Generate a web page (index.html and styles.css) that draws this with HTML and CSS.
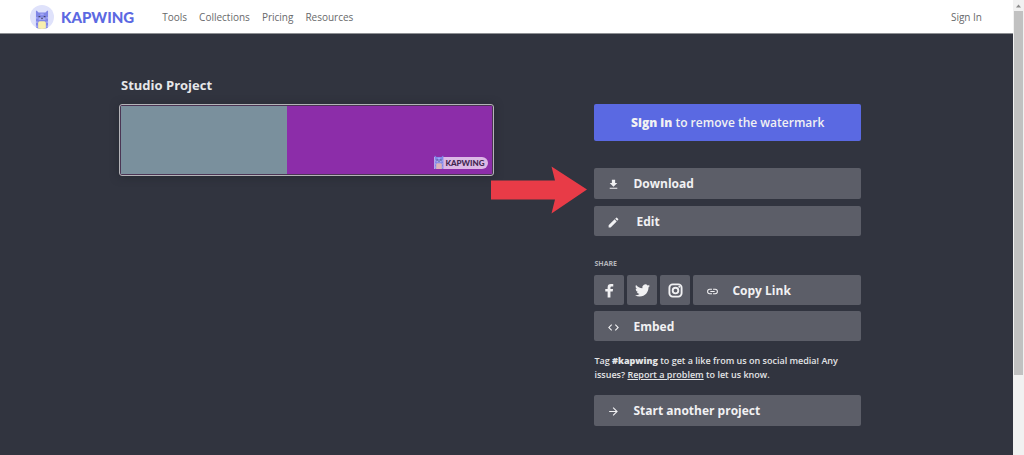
FILE: index.html
```html
<!DOCTYPE html>
<html lang="en">
<head>
<meta charset="utf-8">
<title>Kapwing - Studio Project</title>
<link rel="stylesheet" href="styles.css">
</head>
<body>
<svg class="sprite" aria-hidden="true">
  <symbol id="cat" viewBox="0 0 16 22">
    <path fill="#8087e6" d="M1 1 2 1 4 3h8l2-2L15 1v21H1z"/>
    <path fill="#a3a7f4" d="M1 8h2v2H1zM13 8h2v2h-2zM1 13h2v2H1zM13 13h2v2h-2zM1 18h2v2H1zM13 18h2v2h-2zM6 4h4v2H6z"/>
    <path fill="#a5a9f3" d="M4 8.500h8v3H4z"/>
    <path fill="#454768" d="M4 7h2v1.500H4zM10 7h2v1.500h-2zM6.500 9h3L8 11z"/>
    <path d="M3.500 22v-7q0-2 2-2h5q2 0 2 2v7z"/>
  </symbol>
</svg>
<div class="window">
  <div class="page">
    <header class="topbar">
      <a class="brand" href="#">
        <span class="brand-mark"><svg class="brand-cat" aria-hidden="true"><use href="#cat"/></svg></span>
        <span class="brand-name">KAPWING</span>
      </a>
      <nav class="nav">
        <a href="#">Tools</a>
        <a href="#">Collections</a>
        <a href="#">Pricing</a>
        <a href="#">Resources</a>
      </nav>
      <a class="signin" href="#">Sign In</a>
    </header>
    <main class="content">
      <section class="project">
        <h1 class="title">Studio Project</h1>
        <div class="preview">
          <div class="pane-gray"></div>
          <div class="pane-purple"></div>
          <div class="watermark">
            <svg class="watermark-cat" aria-hidden="true"><use href="#cat"/></svg>
            <span class="watermark-name">KAPWING</span>
          </div>
        </div>
      </section>
      <section class="actions">
        <button class="primary" type="button"><strong>Sign in</strong> to remove the watermark</button>
        <div class="stack">
          <button class="action" type="button">
            <svg class="icon" viewBox="0 0 24 24" aria-hidden="true"><path d="M19 9h-4V3H9v6H5l7 7zM5 18v2h14v-2z"/></svg>
            <span>Download</span>
          </button>
          <button class="action edit" type="button">
            <svg class="icon" viewBox="0 0 24 24" aria-hidden="true"><path d="M3 17.250V21h3.750L17.810 9.940l-3.750-3.750zM20.710 7.040a1 1 0 0 0 0-1.410l-2.340-2.340a1 1 0 0 0-1.410 0l-1.830 1.830 3.750 3.750z"/></svg>
            <span>Edit</span>
          </button>
          <svg class="pointer" viewBox="0 0 96 48" aria-hidden="true"><path d="M0 14.500h64L60.500 0.500 96 23.500 60.500 47.500 64 33.500H0z"/></svg>
        </div>
        <h2 class="share-label">SHARE</h2>
        <div class="share">
          <button class="social" type="button" aria-label="Facebook">
            <svg viewBox="0 0 16 16" aria-hidden="true"><path d="M6 15.500V9H3.500V6.300H6V4.500Q6 1 9.500 1H12v2.700h-1.700q-1.300 0-1.300 1.300v1.300h2.800L11.400 9H9v6.500z"/></svg>
          </button>
          <button class="social" type="button" aria-label="Twitter">
            <svg viewBox="0 0 24 24" aria-hidden="true"><path d="M23.950 4.570a10 10 0 0 1-2.820.77 4.960 4.960 0 0 0 2.160-2.720c-.95.55-2 .95-3.120 1.180a4.920 4.920 0 0 0-8.390 4.480C7.690 8.090 4.070 6.130 1.640 3.160a4.820 4.820 0 0 0-.67 2.480c0 1.710.87 3.210 2.190 4.100a4.900 4.900 0 0 1-2.230-.62v.06a4.920 4.920 0 0 0 3.950 4.830 5 5 0 0 1-2.210.08 4.940 4.940 0 0 0 4.600 3.420A9.870 9.870 0 0 1 0 19.540a14 14 0 0 0 7.550 2.210c9.050 0 14-7.500 14-13.980l-.02-.64a9.900 9.900 0 0 0 2.420-2.560z"/></svg>
          </button>
          <button class="social" type="button" aria-label="Instagram">
            <svg viewBox="0 0 16 16" aria-hidden="true"><rect class="line" x="1.500" y="1.500" width="13" height="13" rx="3.500"/><circle class="line" cx="8" cy="8" r="3"/><circle cx="12" cy="4" r="1"/></svg>
          </button>
          <button class="action copy" type="button">
            <svg class="icon" viewBox="0 0 24 24" aria-hidden="true"><path d="M3.900 12A3.100 3.100 0 0 1 7 8.900h4V7H7a5 5 0 0 0 0 10h4v-1.900H7A3.100 3.100 0 0 1 3.900 12zM8 13h8v-2H8zM17 7h-4v1.900h4a3.100 3.100 0 0 1 0 6.200h-4V17h4a5 5 0 0 0 0-10z"/></svg>
            <span>Copy Link</span>
          </button>
        </div>
        <button class="action slim" type="button">
          <svg class="icon" viewBox="0 0 24 24" aria-hidden="true"><path d="M9.400 16.600 4.800 12l4.600-4.600L8 6l-6 6 6 6zM14.600 16.600l4.600-4.600-4.600-4.600L16 6l6 6-6 6z"/></svg>
          <span>Embed</span>
        </button>
        <p class="note">Tag <strong>#kapwing</strong> to get a like from us on social media! Any issues? <a href="#">Report a problem</a> to let us know.</p>
        <button class="action" type="button">
          <svg class="icon" viewBox="0 0 24 24" aria-hidden="true"><path d="m12 4-1.410 1.410L16.170 11H4v2h12.170l-5.580 5.590L12 20l8-8z"/></svg>
          <span>Start another project</span>
        </button>
      </section>
    </main>
  </div>
  <div class="scrollbar" aria-hidden="true">
    <svg class="scroll-up" viewBox="0 0 11 11"><path d="M3 7.500 5.500 4.500 8 7.500z"/></svg>
    <div class="scroll-thumb"></div>
  </div>
</div>
</body>
</html>
```
FILE: styles.css
```css
* {
  box-sizing: border-box;
}

body {
  margin: 0;
  font-family: "Open Sans", "Noto Sans", sans-serif;
  background: #31343f;
}

button {
  border: 0;
  border-radius: 2px;
  font: inherit;
  color: #f1f1f3;
  cursor: pointer;
}

.sprite {
  display: none;
}

.window {
  display: flex;
  min-height: 100vh;
}

.page {
  flex: 1;
}

.topbar {
  display: flex;
  align-items: center;
  height: 34px;
  padding: 0 31px 0 30px;
  background: #fff;
  border-bottom: 1px solid #8d8f93;
}

.topbar a {
  color: #68696b;
  font-size: 10px;
  font-weight: 500;
  text-decoration: none;
}

.topbar .brand {
  display: flex;
  align-items: center;
  gap: 7px;
}

.brand-mark {
  display: flex;
  justify-content: center;
  align-items: flex-end;
  width: 24px;
  height: 24px;
  border-radius: 50%;
  background: #dfe2fb;
  overflow: hidden;
}

.brand-cat {
  width: 14px;
  height: 19px;
  fill: #f8efae;
}

.brand-name {
  color: #5c69e2;
  font-family: Lato, sans-serif;
  font-size: 15px;
  font-weight: 900;
}

.nav {
  display: flex;
  gap: 12px;
  margin-left: 28px;
}

.topbar .signin {
  margin-left: auto;
}

.content {
  display: grid;
  grid-template-columns: minmax(0, 376fr) minmax(0, 267fr);
  column-gap: 100px;
  padding: 41px 15% 29px 119px;
}

.title {
  margin: 0 0 9px 2px;
  color: #e6e7e9;
  font-size: 13px;
  font-weight: 700;
  line-height: 20px;
}

.preview {
  position: relative;
  display: flex;
  height: 72px;
  border: 1px solid #b4b4b8;
  border-radius: 3px;
  padding: 1px;
  background: #4b3554;
  box-shadow: 0 1px 8px #262932;
}

.pane-gray {
  flex: 166;
  background: #7a909d;
}

.pane-purple {
  flex: 206;
  background: #8c2da9;
}

.watermark {
  position: absolute;
  right: 5px;
  bottom: 6px;
  display: flex;
  align-items: center;
  gap: 1px;
  height: 12px;
  padding-right: 4px;
  border-radius: 0 6px 6px 0;
  background: #dcb8e6;
  color: #40264f;
}

.watermark-cat {
  width: 10px;
  height: 14px;
  margin-top: -2px;
  fill: #dbb3b9;
}

.watermark-name {
  font-family: Lato, sans-serif;
  font-size: 8px;
  font-weight: 900;
}

.actions {
  display: flex;
  flex-direction: column;
  padding-top: 29px;
}

.primary {
  height: 37px;
  background: #5a69e2;
  font-size: 12px;
  font-weight: 600;
}

.stack {
  position: relative;
  display: flex;
  flex-direction: column;
  gap: 7px;
  margin-top: 27px;
}

.pointer {
  position: absolute;
  right: 100%;
  top: -2px;
  width: 96px;
  height: 48px;
  margin-right: 7px;
  fill: #e83b47;
}

.action {
  display: flex;
  align-items: center;
  gap: 13px;
  height: 31px;
  padding: 0 13px;
  background: #5c5e68;
  font-size: 12px;
  font-weight: 700;
}

.edit,
.copy,
.slim {
  height: 30px;
}

.edit {
  gap: 16px;
}

.icon {
  width: 13px;
  height: 13px;
  margin-top: 2px;
  fill: currentColor;
}

.share-label {
  margin: 22px 0 5px;
  color: #b4b5ba;
  font-size: 7px;
  font-weight: 700;
  line-height: 12px;
}

.share {
  display: flex;
  gap: 3px;
  margin-bottom: 6px;
}

.social {
  display: grid;
  place-items: center;
  width: 30px;
  height: 30px;
  padding: 0;
  background: #5c5e68;
}

.social svg {
  width: 15px;
  height: 15px;
  fill: currentColor;
}

.social .line {
  fill: none;
  stroke: currentColor;
  stroke-width: 2;
}

.copy {
  flex: 1;
}

.note {
  margin: 13px 0;
  padding-right: 16px;
  color: #e3e4e6;
  font-size: 9px;
  font-weight: 600;
  line-height: 14px;
}

.note a {
  color: inherit;
}

.scrollbar {
  width: 11px;
  background: #f1f1f1;
}

.scroll-up {
  display: block;
  width: 11px;
  height: 11px;
  fill: #8b8b8b;
}

.scroll-thumb {
  height: calc(100vh - 91px);
  margin: 0 1px;
  background: #c1c1c1;
}
```
